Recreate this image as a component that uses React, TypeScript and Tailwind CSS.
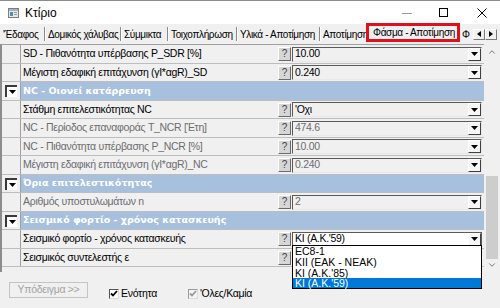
import React from 'react';
import { ChevronUp, ChevronDown } from 'lucide-react';

type Row =
  | { kind: 'header'; label: string }
  | { kind: 'item'; label: string; value: string; disabled?: boolean; active?: boolean };

const ROWS: Row[] = [
  { kind: 'item', label: 'SD - Πιθανότητα υπέρβασης P_SDR [%]', value: '10.00' },
  { kind: 'item', label: 'Μέγιστη εδαφική επιτάχυνση (γΙ*αgR)_SD', value: '0.240' },
  { kind: 'header', label: 'NC - Οιονεί κατάρρευση' },
  { kind: 'item', label: 'Στάθμη επιτελεστικότητας NC', value: "'Οχι" },
  { kind: 'item', label: 'NC - Περίοδος επαναφοράς T_NCR [Έτη]', value: '474.6', disabled: true },
  { kind: 'item', label: 'NC - Πιθανότητα υπέρβασης P_NCR [%]', value: '10.00', disabled: true },
  { kind: 'item', label: 'Μέγιστη εδαφική επιτάχυνση (γΙ*αgR)_NC', value: '0.240', disabled: true },
  { kind: 'header', label: 'Όρια επιτελεστικότητας' },
  { kind: 'item', label: 'Αριθμός υποστυλωμάτων n', value: '2', disabled: true },
  { kind: 'header', label: 'Σεισμικό φορτίο - χρόνος κατασκευής' },
  { kind: 'item', label: 'Σεισμικό φορτίο - χρόνος κατασκευής', value: "ΚΙ (Α.Κ.'59)", active: true },
  { kind: 'item', label: 'Σεισμικός συντελεστής ε', value: '' },
];

const OPTIONS = ['EC8-1', 'ΚΙΙ (ΕΑΚ - ΝΕΑΚ)', "ΚΙ (Α.Κ.'85)", "ΚΙ (Α.Κ.'59)"];
const OPTION_H = ['h-[11px]', 'h-[11px]', 'h-[10px]', 'h-[10px]'];

function Tri() {
  return (
    <svg width="7" height="4" viewBox="0 0 7 4">
      <path d="M0 0h7L3.5 4z" fill="#000" />
    </svg>
  );
}

function DropBtn() {
  return (
    <div className="flex h-full w-[13px] items-center justify-center border border-[#404040] border-l-white border-t-white bg-[#f6f6f6]">
      <Tri />
    </div>
  );
}

function HelpBtn() {
  return (
    <div className="flex h-[14px] w-[13px] items-center justify-center border border-[#6a6a6a] border-l-white border-t-white bg-[#d6d6d6] text-[10px] leading-none text-[#444]">
      ?
    </div>
  );
}

function Tab({ w, label }: { w: string; label: string }) {
  return <div className={`${w} whitespace-nowrap pl-[2px]`}>{label}</div>;
}

function Sep() {
  return <div className="h-[14px] w-[2px] border-l border-[#8a8a8a] border-r border-r-white" />;
}

export default function App() {
  return (
    <div className="relative flex h-[308px] w-[500px] flex-col overflow-hidden bg-[#f0f0f0] text-[10.5px] tracking-[-0.3px] text-black font-['Liberation_Sans',Arial,sans-serif]">
      {/* title bar */}
      <div className="flex h-[24px] items-center border-t border-[#8c8c8c] bg-white">
        <svg className="ml-[8px]" width="11" height="10" viewBox="0 0 11 10">
          <rect x="0.5" y="0.5" width="10" height="9" fill="#e8e8e8" stroke="#7d7d7d" />
          <rect x="1" y="1" width="9" height="2" fill="#9db4c8" />
          <rect x="2" y="4" width="3" height="4" fill="#4f8fa8" />
          <rect x="6" y="4" width="3" height="1" fill="#9a9a9a" />
          <rect x="6" y="6" width="3" height="1" fill="#9a9a9a" />
        </svg>
        <span className="ml-[6px] text-[12px] tracking-normal">Κτίριο</span>
        <div className="ml-auto flex items-center">
          <svg width="10" height="10" viewBox="0 0 10 10" className="mr-[27px]">
            <path d="M0 5.5h10" stroke="#9a9a9a" strokeWidth="1" />
          </svg>
          <svg width="9" height="9" viewBox="0 0 9 9" className="mr-[29px]">
            <rect x="0.5" y="0.5" width="8" height="8" fill="none" stroke="#000" />
          </svg>
          <svg width="10" height="10" viewBox="0 0 10 10" className="mr-[13px]">
            <path d="M0.5 0.5l9 9M9.5 0.5l-9 9" stroke="#000" strokeWidth="1" />
          </svg>
        </div>
      </div>

      {/* tab strip */}
      <div className="flex h-[20px] items-center text-[10px] tracking-[-0.35px]">
        <div className="w-[44px] whitespace-nowrap pl-[3px]">'Έδαφος</div>
        <Sep />
        <Tab w="w-[74px]" label="Δομικός χάλυβας" />
        <Sep />
        <Tab w="w-[45px]" label="Σύμμικτα" />
        <Sep />
        <Tab w="w-[67px]" label="Τοιχοπλήρωση" />
        <Sep />
        <Tab w="w-[81px]" label="Υλικά - Αποτίμηση" />
        <Sep />
        <Tab w="w-[45px]" label="Αποτίμηση" />
        <div className="-mt-[4px] flex h-[19px] w-[94px] items-center border-[3px] border-[#e0111b] pl-[4px] whitespace-nowrap">
          Φάσμα - Αποτίμηση
        </div>
        <div className="ml-[2px] w-[11px] whitespace-nowrap">Φ</div>
        <div className="flex h-[11px]">
          <div className="flex w-[12px] items-center justify-center border border-[#7a7a7a] border-l-white border-t-white bg-[#f0f0f0]">
            <svg width="4" height="6" viewBox="0 0 4 6"><path d="M4 0v6L0 3z" fill="#000" /></svg>
          </div>
          <div className="flex w-[12px] items-center justify-center border border-[#7a7a7a] border-l-white border-t-white bg-[#f0f0f0]">
            <svg width="4" height="6" viewBox="0 0 4 6"><path d="M0 0v6l4-3z" fill="#000" /></svg>
          </div>
        </div>
      </div>

      {/* property grid */}
      <div className="flex h-[228px]">
        <div className="flex w-[484px] flex-col border-l-2 border-t border-[#8c8c8c] border-t-[#a0a0a0]">
          {ROWS.map((r, i) => (
            <div
              key={i}
              className={`flex ${i % 2 === 0 ? 'h-[19px]' : 'h-[18px]'} border-b border-[#bdbdbd]`}
            >
              <div className="flex w-[19px] shrink-0 items-center justify-center border-r border-[#a0a0a0]">
                {r.kind === 'header' && (
                  <div className="flex h-[12px] w-[12px] items-center justify-center border-l-2 border-t-2 border-[#3a3a3a] bg-white">
                    <Tri />
                  </div>
                )}
              </div>
              {r.kind === 'header' ? (
                <div className="flex flex-1 items-center bg-[#a7c0dd] pl-[2px] text-[9.5px] font-bold tracking-normal text-white font-['DejaVu_Sans',Verdana,sans-serif]">
                  {r.label}
                </div>
              ) : (
                <>
                  <div
                    className={`flex flex-1 items-center overflow-hidden whitespace-nowrap pl-[2px] ${r.disabled ? 'text-[#6d6d6d]' : ''}`}
                  >
                    {r.label}
                  </div>
                  <div className="flex w-[207px] shrink-0 items-center pl-[1px]">
                    <HelpBtn />
                    <div
                      className={`ml-[1px] flex h-[15px] w-[190px] ${
                        r.active
                          ? 'border border-[#5a5a5a] bg-white'
                          : 'border border-[#e8e8e8] border-l-[#5a5a5a] border-t-[#5a5a5a] bg-[#f0f0f0]'
                      }`}
                    >
                      <div
                        className={`flex flex-1 items-center pl-[2px] ${r.disabled ? 'text-[#6d6d6d]' : ''}`}
                      >
                        {r.value}
                      </div>
                      <DropBtn />
                    </div>
                  </div>
                </>
              )}
            </div>
          ))}
        </div>

        {/* scrollbar */}
        <div className="flex w-[16px] flex-col">
          <div className="flex h-[17px] items-center justify-center">
            <ChevronUp size={10} strokeWidth={2} color="#606060" />
          </div>
          <div className="flex flex-1 flex-col pl-[2px] pr-[2px]">
            <div className="h-[116px]" />
            <div className="h-[83px] bg-[#cdcdcd]" />
          </div>
          <div className="flex h-[14px] items-center justify-center">
            <ChevronDown size={10} strokeWidth={2} color="#606060" />
          </div>
        </div>
      </div>

      {/* bottom panel */}
      <div className="flex flex-1 items-start pt-[10px]">
        <div className="ml-[9px] flex h-[16px] w-[79px] items-center justify-center border border-[#c4c4c4] bg-[#f0f0f0] text-[#a3a3a3]">
          Υπόδειγμα &gt;&gt;
        </div>
        <div className="ml-[21px] mt-[4px] flex items-center">
          <div className="flex h-[10px] w-[10px] items-center justify-center border border-[#dcdcdc] border-l-[#555] border-t-[#555] bg-white">
            <svg width="8" height="7" viewBox="0 0 8 7"><path d="M1 3.5l2 2 4-4.5" fill="none" stroke="#000" strokeWidth="1.8" /></svg>
          </div>
          <span className="ml-[2px]">Ενότητα</span>
        </div>
        <div className="ml-[31px] mt-[4px] flex items-center">
          <div className="flex h-[10px] w-[10px] items-center justify-center border border-[#dcdcdc] border-l-[#999] border-t-[#999] bg-[#f4f4f4]">
            <svg width="8" height="7" viewBox="0 0 8 7"><path d="M1 3.5l2 2 4-4.5" fill="none" stroke="#9a9a9a" strokeWidth="1.8" /></svg>
          </div>
          <span className="ml-[2px]">'Ολες/Καμία</span>
        </div>
      </div>

      {/* open dropdown list */}
      <div className="absolute left-[292px] top-[245px] flex w-[190px] flex-col border border-black bg-white tracking-normal">
        {OPTIONS.map((o, i) => (
          <div
            key={o}
            className={`flex ${OPTION_H[i]} items-center pl-[2px] leading-none ${i === 3 ? 'bg-[#0078d7] text-white' : ''}`}
          >
            {o}
          </div>
        ))}
      </div>
    </div>
  );
}
